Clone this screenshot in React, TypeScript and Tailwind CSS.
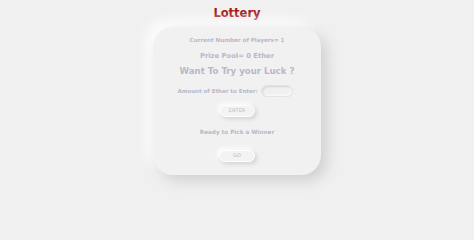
const App = () => {
  return (
    <div className="min-h-screen bg-[#f0f0f0] flex flex-col items-center font-['DejaVu_Sans',sans-serif]">
      <h1 className="mt-[4px] text-[11.5px] leading-[18px] font-bold text-[#a00c0c]">Lottery</h1>
      <div className="mt-[5px] w-[168px] h-[148px] rounded-[20px] bg-[#f1f1f1] shadow-[6px_6px_14px_#d0d0d0,-6px_-6px_14px_#ffffff] flex flex-col items-center text-[#b8b8c8] font-bold">
        <p className="mt-[9px] text-[5.6px] leading-[9px]">Current Number of Players= 1</p>
        <p className="mt-[6px] text-[6.8px] leading-[11px]">Prize Pool= 0 Ether</p>
        <p className="mt-[3px] text-[8.6px] leading-[13px]">Want To Try your Luck ?</p>
        <div className="mt-[7px] flex items-center gap-[3px] -ml-[4px]">
          <span className="text-[5.5px] leading-[9px]">Amount of Ether to Enter:</span>
          <input className="w-[32px] h-[12px] rounded-full bg-[#f0f0f0] outline-none shadow-[inset_1px_1px_2px_#d4d4d4,inset_-1px_-1px_2px_#ffffff] border border-[#e2e2e2]" />
        </div>
        <button className="mt-[8px] w-[35px] h-[12px] rounded-full bg-[#f3f3f3] border border-white shadow-[2px_2px_4px_#d2d2d2,-2px_-2px_4px_#ffffff] text-[4.8px] font-normal text-[#b8b8c4] tracking-wide">
          ENTER
        </button>
        <p className="mt-[11px] text-[5.7px] leading-[9px]">Ready to Pick a Winner</p>
        <button className="mt-[13px] w-[36px] h-[12px] rounded-full bg-[#f3f3f3] border border-white shadow-[2px_2px_4px_#d2d2d2,-2px_-2px_4px_#ffffff] text-[5px] font-normal text-[#b8b8c4]">
          GO
        </button>
      </div>
    </div>
  );
};

export default App;
